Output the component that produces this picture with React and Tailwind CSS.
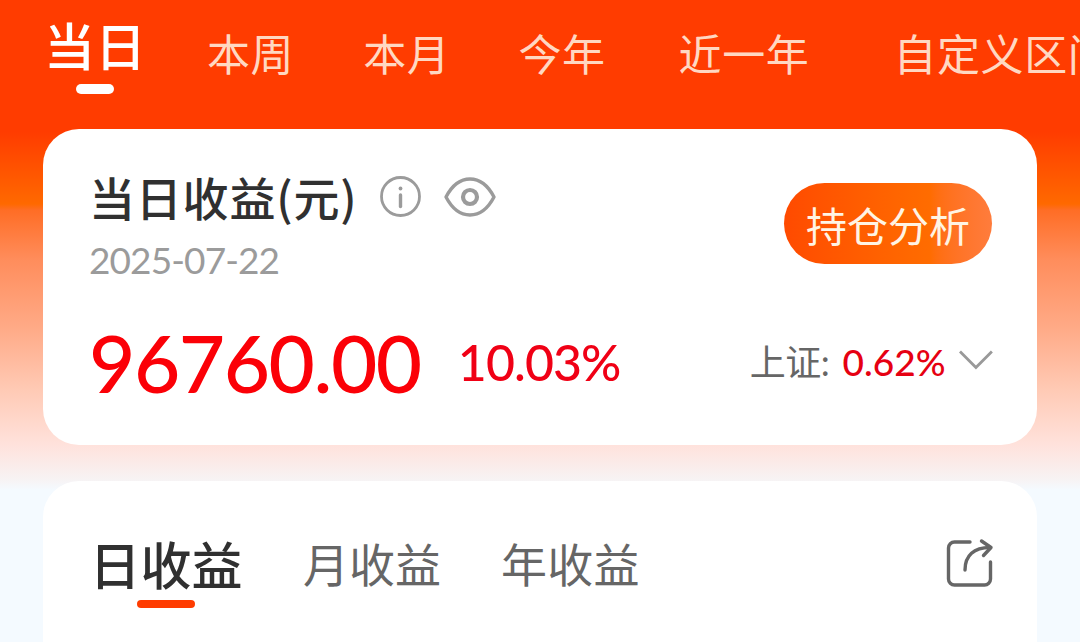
import React, { useState } from "react";

const RANGES = [
  { label: "本周", className: "ml-[62px]" },
  { label: "本月", className: "ml-[69px]" },
  { label: "今年", className: "ml-[68px]" },
  { label: "近一年", className: "ml-[73px]" },
  { label: "自定义区间", className: "ml-[84px]" },
];

function InfoIcon() {
  return (
    <svg width="42" height="42" viewBox="0 0 42 42" fill="none" stroke="#9b9b9b" strokeLinecap="round">
      <circle cx="20.500" cy="20.500" r="19" strokeWidth="2.800" />
      <path d="M20.500 19v11.500" strokeWidth="3.400" />
      <circle cx="20.500" cy="12.500" r="1.900" fill="#9b9b9b" stroke="none" />
    </svg>
  );
}

function EyeIcon() {
  return (
    <svg width="52" height="42" viewBox="0 0 52 42" fill="none" stroke="#9b9b9b" strokeLinejoin="round">
      <path
        d="M2 21C7.500 10.500 16 3 26 3s18.500 7.500 24 18c-5.500 10.500-14 18-24 18S7.500 31.500 2 21z"
        strokeWidth="3.400"
      />
      <circle cx="26" cy="21" r="7" strokeWidth="4.200" />
    </svg>
  );
}

function ShareIcon() {
  return (
    <svg width="48" height="50" viewBox="0 0 48 50" fill="none" stroke="#666666" strokeWidth="3.400" strokeLinecap="round" strokeLinejoin="round">
      <path d="M24 4H8.500A6 6 0 0 0 2.500 10v31a6 6 0 0 0 6 6H38.500a6 6 0 0 0 6-6V24" />
      <path d="M19 32C19 17.500 28 9.500 44 9.500" />
      <path d="M35.500 3L45 9.500L37.500 17.500" />
    </svg>
  );
}

function RangeTabs() {
  return (
    <div className="flex h-[129px] shrink-0 items-start overflow-hidden whitespace-nowrap pl-[45px]">
      <div className="flex w-[100px] shrink-0 flex-col items-center pt-[17px]">
        <span className="text-[51px] font-medium leading-[60px] text-white">当日</span>
        <span className="mt-[7px] h-[10px] w-[38px] rounded-full bg-white" />
      </div>
      {RANGES.map((r) => (
        <span
          key={r.label}
          className={`shrink-0 pt-[25px] text-[43px] leading-[60px] tracking-[0.6px] text-[#ffd8c2] ${r.className}`}
        >
          {r.label}
        </span>
      ))}
    </div>
  );
}

function SummaryCard() {
  const [visible, setVisible] = useState(true);
  return (
    <section className="mx-[43px] flex h-[316px] shrink-0 flex-col rounded-[36px] bg-white pl-[46px] pr-[43px]">
      <div className="flex justify-between">
        <div>
          <div className="flex items-center pt-[37px]">
            <h2 className="w-[291px] whitespace-nowrap pb-[2px] font-['Noto_Sans_CJK_SC',sans-serif] text-[46px] font-medium leading-[60px] tracking-[0.8px] text-[#303030]">
              当日收益(元)
            </h2>
            <InfoIcon />
            <button className="ml-[22px]" onClick={() => setVisible(!visible)}>
              <EyeIcon />
            </button>
          </div>
          <p className="mt-[10px] text-[37px] leading-[44px] tracking-[-0.9px] text-[#9b9b9b]">2025-07-22</p>
        </div>
        <button className="mr-[2px] mt-[54px] h-[81px] w-[208px] rounded-full bg-linear-to-r from-[#ff4a00] via-[#ff6c00] via-70% to-[#ff7c3c] pt-[3px] text-[41px] leading-[81px] text-[#fff4e4]">
          持仓分析
        </button>
      </div>
      <div className="mt-[34px] flex items-center whitespace-nowrap">
        <span className="w-[370px] text-[80px] font-medium leading-[92px] tracking-[-1.5px] text-[#fb0007]">
          {visible ? "96760.00" : "****"}
        </span>
        <span className="w-[293px] text-[50px] font-medium leading-[90px] tracking-[-0.9px] text-[#f00015]">
          {visible ? "10.03%" : "****"}
        </span>
        <span className="w-[92px] text-[36px] leading-[90px] tracking-[-0.5px] text-[#666666]">上证:</span>
        <span className="w-[117px] pl-px text-[37px] font-medium leading-[90px] text-[#e60012]">0.62%</span>
        <svg className="mb-[4px]" width="36" height="22" viewBox="0 0 36 22" fill="none" stroke="#999999" strokeWidth="2.800">
          <path d="M2 2.500L18 18.500L34 2.500" />
        </svg>
      </div>
    </section>
  );
}

function ProfitTabs() {
  return (
    <section className="mx-[43px] mt-[36px] flex grow items-start whitespace-nowrap rounded-t-[36px] bg-white pl-[46px] pr-[43px]">
      <div className="flex w-[154px] flex-col items-center pt-[54px]">
        <span className="pt-px text-[51px] font-medium leading-[60px] text-[#303030]">日收益</span>
        <span className="mt-[4px] h-[8px] w-[58px] rounded-full bg-[#ff3c00]" />
      </div>
      <span className="ml-[60px] pt-[54px] text-[46px] leading-[60px] text-[#666666]">月收益</span>
      <span className="ml-[60px] pt-[54px] text-[46px] leading-[60px] tracking-[0.3px] text-[#666666]">年收益</span>
      <button className="ml-auto mt-[57px]">
        <ShareIcon />
      </button>
    </section>
  );
}

export default function App() {
  return (
    <div className="flex h-[642px] w-[1080px] flex-col overflow-hidden bg-[linear-gradient(to_bottom,#ff3c00_0px,#ff3c00_132px,#ff6900_204px,#ff6d25_210px,#ff8d5c_260px,#ffab88_330px,#ffcab5_390px,#ffe2dc_445px,#f7f3f4_480px,#f4faff_490px,#f4faff_642px)] font-[Lato,'Noto_Sans_CJK_SC',sans-serif]">
      <RangeTabs />
      <SummaryCard />
      <ProfitTabs />
    </div>
  );
}
